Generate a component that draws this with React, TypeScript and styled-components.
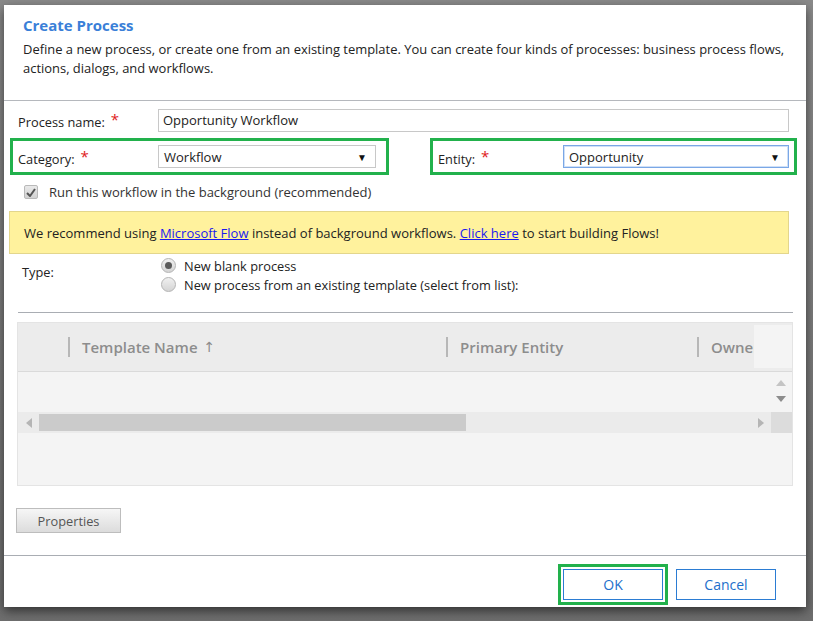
import React from "react";
import styled, { createGlobalStyle } from "styled-components";

const GlobalStyle = createGlobalStyle`
  html, body {
    margin: 0;
    padding: 0;
    background: #6f6f6f;
  }
  * {
    box-sizing: border-box;
  }
`;

const green = "#22b14c";
const blue = "#2b7cd3";

const Backdrop = styled.div`
  width: 813px;
  height: 621px;
  padding: 5px 0 0 4px;
  background: linear-gradient(#8a8a8a, #6e6e6e);
  overflow: hidden;
  font-family: "Open Sans", "Noto Sans", sans-serif;
  color: #222;
`;

const Dialog = styled.div`
  width: 802px;
  height: 602px;
  background: #fff;
  box-shadow: 0 4px 10px rgba(0, 0, 0, 0.55);
  display: flex;
  flex-direction: column;
`;

const Header = styled.header`
  height: 96px;
  padding: 10px 19px 0;
  border-bottom: 1px solid #b5b8bd;
`;

const Title = styled.h1`
  margin: 0;
  font-size: 15px;
  line-height: 20px;
  font-weight: 700;
  color: #3a7fd8;
`;

const Description = styled.p`
  margin: 5px 0 0;
  font-size: 12.95px;
  line-height: 19px;
  color: #222;
`;

const Body = styled.div`
  flex: 1;
  padding: 7px 0 0;
`;

const Row = styled.div`
  display: flex;
  align-items: center;
  padding: 0 17px 0 14px;
  height: 24px;
`;

const Label = styled.div<{ $width: number }>`
  width: ${p => p.$width}px;
  font-size: 12.8px;
  flex: none;
`;

const Star = styled.span`
  color: #e01b1b;
  margin-left: 6px;
  font-size: 15px;
  vertical-align: 2px;
`;

const TextInput = styled.div`
  flex: 1;
  height: 23px;
  border: 1px solid #c8c8c8;
  padding: 0 4px;
  font-size: 13px;
  line-height: 21px;
`;

const FieldsRow = styled.div`
  display: flex;
  justify-content: space-between;
  padding: 0 9px 0 6px;
  margin-top: 6px;
`;

const Highlight = styled.div<{ $width: number; $inset: number }>`
  width: ${p => p.$width}px;
  height: 37px;
  border: 3px solid ${green};
  display: flex;
  align-items: center;
  padding: 0 ${p => p.$inset}px 0 5px;
`;

const Select = styled.div<{ $focused?: boolean }>`
  flex: 1;
  height: 23px;
  display: flex;
  align-items: center;
  justify-content: space-between;
  border: 1px solid ${p => (p.$focused ? "#7aa7e6" : "#c8c8c8")};
  box-shadow: ${p => (p.$focused ? "inset 0 0 0 1px #cfe0f7" : "none")};
  padding: 0 8px 0 5px;
  font-size: 13px;
`;

const Arrow = styled.span`
  font-size: 10px;
  color: #111;
`;

const CheckRow = styled.div`
  display: flex;
  align-items: center;
  gap: 11px;
  padding-left: 20px;
  margin-top: 6px;
  height: 22px;
  font-size: 13px;
  color: #333;
`;

const CheckBox = styled.span`
  width: 14px;
  height: 14px;
  border: 1px solid #b9b9b9;
  border-radius: 2px;
  background: linear-gradient(#e9e9e9, #d2d2d2);
  display: flex;
  align-items: center;
  justify-content: center;
`;

const Banner = styled.div`
  margin: 8px 17px 0 5px;
  height: 43px;
  background: #fff29d;
  border: 1px solid #e3d68c;
  display: flex;
  align-items: center;
  padding-left: 14px;
  font-size: 13px;
  color: #222;
`;

const Link = styled.a`
  color: #1a1aee;
  text-decoration: underline;
`;

const TypeSection = styled.div`
  display: flex;
  padding: 2px 0 0 18px;
`;

const TypeLabel = styled.div`
  width: 139px;
  padding-top: 7px;
  font-size: 12.8px;
`;

const RadioList = styled.div`
  display: flex;
  flex-direction: column;
`;

const RadioRow = styled.div`
  display: flex;
  align-items: center;
  gap: 8px;
  height: 19px;
  font-size: 12.8px;
`;

const Radio = styled.span<{ $checked?: boolean }>`
  width: 15px;
  height: 15px;
  border-radius: 50%;
  border: 1px solid #b4b4b4;
  background: linear-gradient(#f0f0f0, #d4d4d4);
  display: flex;
  align-items: center;
  justify-content: center;
  &::after {
    content: "";
    width: 7px;
    height: 7px;
    border-radius: 50%;
    background: ${p => (p.$checked ? "#5a5a5a" : "transparent")};
  }
`;

const Divider = styled.hr`
  margin: 18px 13px 0 14px;
  border: none;
  border-top: 1px solid #a9adb3;
`;

const Grid = styled.div`
  margin: 9px 13px 0 13px;
  height: 164px;
  border: 1px solid #e4e4e4;
  background: #f4f4f4;
  display: flex;
  flex-direction: column;
`;

const GridHeader = styled.div`
  height: 49px;
  background: #ececec;
  border-bottom: 1px solid #dadada;
  display: flex;
  align-items: center;
  position: relative;
  overflow: hidden;
`;

const Column = styled.div<{ $width: number }>`
  width: ${p => p.$width}px;
  flex: none;
  display: flex;
  align-items: center;
  gap: 12px;
  font-size: 15px;
  font-weight: 600;
  color: #8d8d8d;
  white-space: nowrap;
`;

const SortArrow = styled.span`
  font-family: "DejaVu Sans", sans-serif;
  font-size: 14px;
  font-weight: 400;
  color: #8d8d8d;
  margin-left: -6px;
`;

const Separator = styled.span`
  width: 2px;
  height: 20px;
  background: #b7b7b7;
`;

const Corner = styled.div`
  position: absolute;
  right: 0;
  top: 2px;
  width: 38px;
  height: 43px;
  background: #f4f4f4;
`;

const GridBody = styled.div`
  height: 40px;
  display: flex;
  justify-content: flex-end;
`;

const VScroll = styled.div`
  width: 22px;
  display: flex;
  flex-direction: column;
  align-items: center;
  justify-content: center;
  gap: 10px;
  padding-bottom: 2px;
`;

const HScroll = styled.div`
  height: 21px;
  display: flex;
  align-items: stretch;
  background: #ebebeb;
`;

const ScrollBtn = styled.div`
  width: 21px;
  display: flex;
  align-items: center;
  justify-content: center;
`;

const Track = styled.div`
  flex: 1;
  display: flex;
  align-items: center;
`;

const Thumb = styled.div`
  width: 427px;
  height: 17px;
  background: #cbcbcb;
`;

const ScrollCorner = styled.div`
  width: 21px;
  background: #dcdcdc;
`;

const PropertiesButton = styled.button`
  margin: 22px 0 0 12px;
  width: 105px;
  height: 25px;
  border: 1px solid #bdbdbd;
  background: linear-gradient(#f6f6f6, #dcdcdc);
  font-family: inherit;
  font-size: 12.8px;
  color: #555;
  padding: 0;
`;

const Footer = styled.footer`
  height: 52px;
  border-top: 1px solid #a9adb3;
  display: flex;
  justify-content: flex-end;
  align-items: center;
  padding: 6px 30px 0 0;
  gap: 8px;
`;

const OkFrame = styled.div`
  border: 3px solid ${green};
  padding: 2px;
`;

const DialogButton = styled.button`
  width: 100px;
  height: 31px;
  border: 1px solid ${blue};
  background: #fff;
  color: #1d6fcb;
  font-family: inherit;
  font-size: 14px;
  padding: 0;
`;

const Triangle = ({ dir, color = "#b5b5b5" }: { dir: "up" | "down" | "left" | "right"; color?: string }) => {
  const paths = {
    up: "M0 6 L5 0 L10 6 Z",
    down: "M0 0 L10 0 L5 6 Z",
    left: "M6 0 L6 10 L0 5 Z",
    right: "M0 0 L6 5 L0 10 Z",
  };
  const vertical = dir === "up" || dir === "down";
  return (
    <svg width={vertical ? 10 : 6} height={vertical ? 6 : 10} viewBox={vertical ? "0 0 10 6" : "0 0 6 10"}>
      <path d={paths[dir]} fill={color} />
    </svg>
  );
};

export default function App() {
  return (
    <>
      <GlobalStyle />
      <Backdrop>
        <Dialog>
          <Header>
            <Title>Create Process</Title>
            <Description>
              Define a new process, or create one from an existing template. You can create four kinds of processes: business process flows,
              actions, dialogs, and workflows.
            </Description>
          </Header>
          <Body>
            <Row>
              <Label $width={140}>
                Process name:<Star>*</Star>
              </Label>
              <TextInput>Opportunity Workflow</TextInput>
            </Row>
            <FieldsRow>
              <Highlight $width={379} $inset={10}>
                <Label $width={140}>
                  Category:<Star>*</Star>
                </Label>
                <Select>
                  Workflow
                  <Arrow>▼</Arrow>
                </Select>
              </Highlight>
              <Highlight $width={367} $inset={5}>
                <Label $width={125}>
                  Entity:<Star>*</Star>
                </Label>
                <Select $focused>
                  Opportunity
                  <Arrow>▼</Arrow>
                </Select>
              </Highlight>
            </FieldsRow>
            <CheckRow>
              <CheckBox>
                <svg width="10" height="9" viewBox="0 0 10 9">
                  <path d="M1 5 L4 8 L9 1" stroke="#555" strokeWidth="2" fill="none" />
                </svg>
              </CheckBox>
              Run this workflow in the background (recommended)
            </CheckRow>
            <Banner>
              <span>
                We recommend using <Link>Microsoft Flow</Link> instead of background workflows. <Link>Click here</Link> to start
                building Flows!
              </span>
            </Banner>
            <TypeSection>
              <TypeLabel>Type:</TypeLabel>
              <RadioList>
                <RadioRow>
                  <Radio $checked />
                  New blank process
                </RadioRow>
                <RadioRow>
                  <Radio />
                  New process from an existing template (select from list):
                </RadioRow>
              </RadioList>
            </TypeSection>
            <Divider />
            <Grid>
              <GridHeader>
                <Column $width={50} />
                <Column $width={378}>
                  <Separator />
                  Template Name <SortArrow>↑</SortArrow>
                </Column>
                <Column $width={251}>
                  <Separator />
                  Primary Entity
                </Column>
                <Column $width={120}>
                  <Separator />
                  Owner
                </Column>
                <Corner />
              </GridHeader>
              <GridBody>
                <VScroll>
                  <Triangle dir="up" color="#c4c4c4" />
                  <Triangle dir="down" color="#8c8c8c" />
                </VScroll>
              </GridBody>
              <HScroll>
                <ScrollBtn>
                  <Triangle dir="left" />
                </ScrollBtn>
                <Track>
                  <Thumb />
                </Track>
                <ScrollBtn>
                  <Triangle dir="right" />
                </ScrollBtn>
                <ScrollCorner />
              </HScroll>
            </Grid>
            <PropertiesButton>Properties</PropertiesButton>
          </Body>
          <Footer>
            <OkFrame>
              <DialogButton>OK</DialogButton>
            </OkFrame>
            <DialogButton>Cancel</DialogButton>
          </Footer>
        </Dialog>
      </Backdrop>
    </>
  );
}
